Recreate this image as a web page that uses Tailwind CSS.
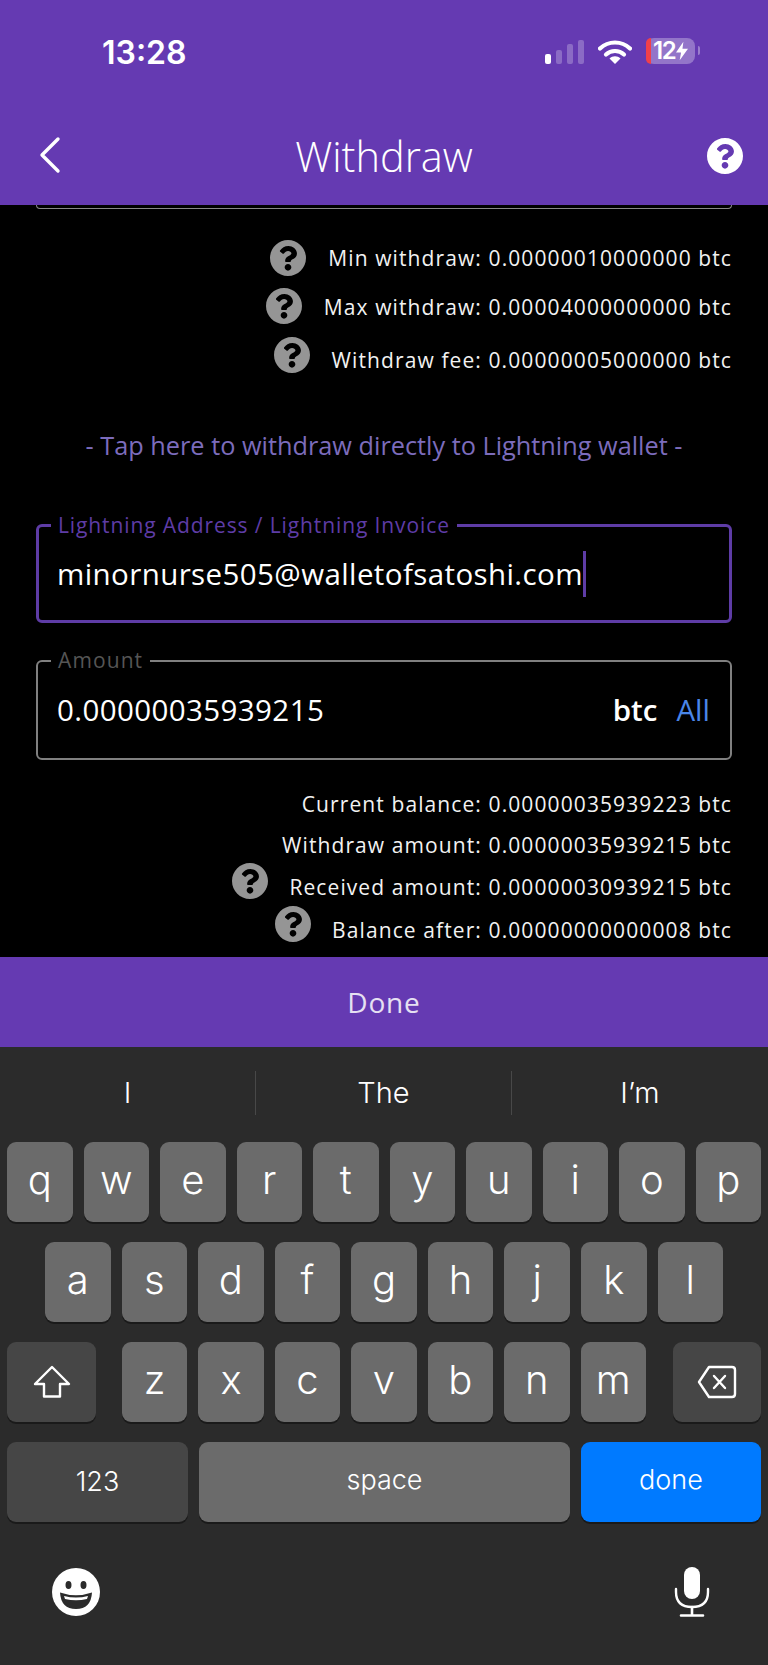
<!DOCTYPE html>
<html lang="en">
<head>
    <meta charset="UTF-8">
    <meta name="viewport" content="width=device-width, initial-scale=1.0">
    <title>Withdraw</title>
    <script src="https://cdn.jsdelivr.net/npm/@tailwindcss/browser@4"></script>
</head>
<body class="bg-black">
    <!-- shared question mark icon -->
    <svg class="hidden">
        <symbol id="help" viewBox="8 8 496 496">
            <path d="M504 256c0 136.997-111.043 248-248 248S8 392.997 8 256C8 119.083 119.043 8 256 8s248 111.083 248 248zM262.655 90c-54.497 0-89.255 22.957-116.549 63.758-3.536 5.286-2.353 12.415 2.715 16.258l34.699 26.31c5.205 3.947 12.621 3.008 16.665-2.122 17.864-22.658 30.113-35.797 57.303-35.797 20.429 0 45.698 13.148 45.698 32.958 0 14.976-12.363 22.667-32.534 33.976C247.128 238.528 216 254.941 216 296v4c0 6.627 5.373 12 12 12h56c6.627 0 12-5.373 12-12v-1.333c0-28.462 83.186-29.647 83.186-106.667 0-58.002-60.165-102-116.531-102zM256 338c-25.365 0-46 20.635-46 46 0 25.364 20.635 46 46 46s46-20.636 46-46c0-25.365-20.635-46-46-46z" fill="currentColor"/>
        </symbol>
    </svg>

    <div class="w-[768px] h-[1665px] flex flex-col overflow-hidden font-['Open_Sans',sans-serif]">
        <!-- header -->
        <header class="h-[205px] shrink-0 bg-[#653ab2] text-white flex flex-col">
            <div class="h-[122px] flex items-start justify-between">
                <span class="ml-[102px] mt-[33px] font-['Inter',sans-serif] font-semibold text-[32px] leading-[40px]">13:28</span>
                <div class="flex items-start mr-[68px] mt-[38px]">
                    <div class="flex items-end gap-[5px] h-[26px]">
                        <div class="w-[6px] h-[10px] rounded-[2px] bg-white"></div>
                        <div class="w-[6px] h-[14px] rounded-[2px] bg-white/25"></div>
                        <div class="w-[6px] h-[20px] rounded-[2px] bg-white/25"></div>
                        <div class="w-[6px] h-[24px] rounded-[2px] bg-white/25"></div>
                    </div>
                    <svg class="ml-[14px] mt-[1px]" width="34" height="25" viewBox="0 0 34 25">
                        <path d="M2 9.5C10.5 1.5 23.5 1.5 32 9.5" fill="none" stroke="white" stroke-width="4.2" stroke-linecap="round"/>
                        <path d="M8 15.5C13 10.8 21 10.8 26 15.5" fill="none" stroke="white" stroke-width="4.2" stroke-linecap="round"/>
                        <path d="M11.5 19.5C14.5 16.6 19.5 16.6 22.5 19.5L17 25Z" fill="white"/>
                    </svg>
                    <div class="ml-[14px] w-[49px] h-[26px] rounded-[8px] bg-white/30 flex items-center">
                        <div class="w-[5px] h-full rounded-l-[8px] bg-[#f0404a]"></div>
                        <span class="ml-[2px] font-['Inter',sans-serif] font-semibold text-[24px] leading-[26px] tracking-[-1.5px]">12</span>
                        <svg class="ml-[1px]" width="12" height="20" viewBox="0 0 13 20"><path d="M8 0L0 11.5H5.5L4 20L13 7.5H7Z" fill="white"/></svg>
                    </div>
                    <div class="ml-[3px] mt-[8px] w-[2px] h-[9px] rounded-r-[2px] bg-white/35"></div>
                </div>
            </div>
            <div class="relative flex items-center justify-center h-[50px]">
                <svg class="absolute left-[38px] top-[14px]" width="24" height="38" viewBox="0 0 24 38"><path d="M20 3L4 19L20 35" fill="none" stroke="white" stroke-width="3.4" stroke-linecap="round" stroke-linejoin="round"/></svg>
                <h1 class="font-light text-[41.5px] leading-[50px] mt-[18px]">Withdraw</h1>
                <svg class="absolute left-[707px] top-[16px] text-white" width="36" height="36"><use href="#help"/></svg>
            </div>
        </header>

        <!-- form -->
        <main class="h-[752px] shrink-0 bg-black text-[#f2f2f2] text-[21px] tracking-[1.1px]">
            <div class="mx-[36px] h-[4px] border-x border-b border-[#888] rounded-b-[5px]"></div>

            <div class="mt-[31px] mr-[36px] flex justify-end items-center gap-[22px] h-[36px]">
                <svg class="text-[#959595]" width="36" height="36"><use href="#help"/></svg>
                <span class="mt-[2px]">Min withdraw: 0.00000010000000 btc</span>
            </div>
            <div class="mt-[12px] mr-[36px] flex justify-end items-center gap-[22px] h-[36px]">
                <svg class="text-[#959595]" width="36" height="36"><use href="#help"/></svg>
                <span class="mt-[3px]">Max withdraw: 0.00004000000000 btc</span>
            </div>
            <div class="mt-[13px] mr-[36px] flex justify-end items-center gap-[22px] h-[36px]">
                <svg class="text-[#959595]" width="36" height="36"><use href="#help"/></svg>
                <span class="mt-[12px]">Withdraw fee: 0.00000005000000 btc</span>
            </div>

            <p class="mt-[52px] h-[40px] text-center text-[25.3px] leading-[40px] tracking-[0px] text-[#7c6cbc]">- Tap here to withdraw directly to Lightning wallet -</p>

            <div class="relative mt-[59px] mx-[36px] h-[99px] border-[3px] border-[#5e3ca6] rounded-[6px] pl-[18px] flex items-center">
                <label class="absolute left-[12px] top-[-15px] bg-black px-[7px] text-[21px] leading-[27px] tracking-[0.89px] text-[#5e3ca6]">Lightning Address / Lightning Invoice</label>
                <span class="text-white text-[29.5px] leading-[46px] tracking-[0.4px]">minornurse505@walletofsatoshi.com</span>
                <div class="w-[3px] h-[46px] bg-[#5e3ca6]"></div>
            </div>

            <div class="relative mt-[37px] mx-[36px] h-[100px] border-2 border-[#808080] rounded-[6px] pl-[19px] pr-[20px] flex items-center justify-between">
                <label class="absolute left-[13px] top-[-15px] bg-black px-[7px] text-[21px] leading-[27px] text-[#555]">Amount</label>
                <span class="text-white text-[29.5px] leading-[40px] tracking-[0.4px]">0.00000035939215</span>
                <div class="flex items-center gap-[19px] text-[29.5px] leading-[40px] tracking-[0px]">
                    <span class="text-white font-semibold">btc</span>
                    <span class="text-[#4a86e8]">All</span>
                </div>
            </div>

            <div class="mt-[30px] mr-[36px] h-[28px] leading-[28px] text-right">Current balance: 0.00000035939223 btc</div>
            <div class="mt-[13px] mr-[36px] h-[28px] leading-[28px] text-right">Withdraw amount: 0.00000035939215 btc</div>
            <div class="mt-[4px] mr-[36px] flex justify-end items-center gap-[21px] h-[36px]">
                <svg class="text-[#959595]" width="36" height="36"><use href="#help"/></svg>
                <span class="mt-[13px]">Received amount: 0.00000030939215 btc</span>
            </div>
            <div class="mt-[7px] mr-[36px] flex justify-end items-center gap-[21px] h-[36px]">
                <svg class="text-[#959595]" width="36" height="36"><use href="#help"/></svg>
                <span class="mt-[13px]">Balance after: 0.00000000000008 btc</span>
            </div>
        </main>

        <!-- done bar -->
        <button class="h-[90px] shrink-0 bg-[#653ab2] text-[#e6e0f2] text-[28px] tracking-[0.8px]">Done</button>

        <!-- keyboard -->
        <section class="h-[618px] shrink-0 bg-[#2b2b2b] text-white font-['Inter',sans-serif] font-light">
            <div class="h-[95px] pb-[4px] grid grid-cols-3 items-center text-[29px]">
                <div class="h-[44px] leading-[44px] text-center border-r border-[#484848]">I</div>
                <div class="h-[44px] leading-[44px] text-center border-r border-[#484848]">The</div>
                <div class="h-[44px] leading-[44px] text-center">I’m</div>
            </div>

            <div class="flex gap-[11px] px-[7px] h-[80px] text-[40px]">
                <div class="flex-1 rounded-[9px] bg-[#6b6b6b] shadow-[0_2px_0_#1a1a1a] flex items-center justify-center pb-[5px]">q</div>
                <div class="flex-1 rounded-[9px] bg-[#6b6b6b] shadow-[0_2px_0_#1a1a1a] flex items-center justify-center pb-[5px]">w</div>
                <div class="flex-1 rounded-[9px] bg-[#6b6b6b] shadow-[0_2px_0_#1a1a1a] flex items-center justify-center pb-[5px]">e</div>
                <div class="flex-1 rounded-[9px] bg-[#6b6b6b] shadow-[0_2px_0_#1a1a1a] flex items-center justify-center pb-[5px]">r</div>
                <div class="flex-1 rounded-[9px] bg-[#6b6b6b] shadow-[0_2px_0_#1a1a1a] flex items-center justify-center pb-[5px]">t</div>
                <div class="flex-1 rounded-[9px] bg-[#6b6b6b] shadow-[0_2px_0_#1a1a1a] flex items-center justify-center pb-[5px]">y</div>
                <div class="flex-1 rounded-[9px] bg-[#6b6b6b] shadow-[0_2px_0_#1a1a1a] flex items-center justify-center pb-[5px]">u</div>
                <div class="flex-1 rounded-[9px] bg-[#6b6b6b] shadow-[0_2px_0_#1a1a1a] flex items-center justify-center pb-[5px]">i</div>
                <div class="flex-1 rounded-[9px] bg-[#6b6b6b] shadow-[0_2px_0_#1a1a1a] flex items-center justify-center pb-[5px]">o</div>
                <div class="flex-1 rounded-[9px] bg-[#6b6b6b] shadow-[0_2px_0_#1a1a1a] flex items-center justify-center pb-[5px]">p</div>
            </div>

            <div class="flex gap-[11px] px-[45px] mt-[20px] h-[80px] text-[40px]">
                <div class="flex-1 rounded-[9px] bg-[#6b6b6b] shadow-[0_2px_0_#1a1a1a] flex items-center justify-center pb-[5px]">a</div>
                <div class="flex-1 rounded-[9px] bg-[#6b6b6b] shadow-[0_2px_0_#1a1a1a] flex items-center justify-center pb-[5px]">s</div>
                <div class="flex-1 rounded-[9px] bg-[#6b6b6b] shadow-[0_2px_0_#1a1a1a] flex items-center justify-center pb-[5px]">d</div>
                <div class="flex-1 rounded-[9px] bg-[#6b6b6b] shadow-[0_2px_0_#1a1a1a] flex items-center justify-center pb-[5px]">f</div>
                <div class="flex-1 rounded-[9px] bg-[#6b6b6b] shadow-[0_2px_0_#1a1a1a] flex items-center justify-center pb-[5px]">g</div>
                <div class="flex-1 rounded-[9px] bg-[#6b6b6b] shadow-[0_2px_0_#1a1a1a] flex items-center justify-center pb-[5px]">h</div>
                <div class="flex-1 rounded-[9px] bg-[#6b6b6b] shadow-[0_2px_0_#1a1a1a] flex items-center justify-center pb-[5px]">j</div>
                <div class="flex-1 rounded-[9px] bg-[#6b6b6b] shadow-[0_2px_0_#1a1a1a] flex items-center justify-center pb-[5px]">k</div>
                <div class="flex-1 rounded-[9px] bg-[#6b6b6b] shadow-[0_2px_0_#1a1a1a] flex items-center justify-center pb-[5px]">l</div>
            </div>

            <div class="flex px-[7px] mt-[20px] h-[80px] text-[40px]">
                <div class="w-[89px] mr-[26px] rounded-[9px] bg-[#464646] shadow-[0_2px_0_#1a1a1a] flex items-center justify-center">
                    <svg width="38" height="34" viewBox="0 0 38 34"><path d="M19 2L36 19H27V31.5H11V19H2Z" fill="none" stroke="white" stroke-width="2.4" stroke-linejoin="round"/></svg>
                </div>
                <div class="flex flex-1 gap-[11px]">
                    <div class="flex-1 rounded-[9px] bg-[#6b6b6b] shadow-[0_2px_0_#1a1a1a] flex items-center justify-center pb-[5px]">z</div>
                    <div class="flex-1 rounded-[9px] bg-[#6b6b6b] shadow-[0_2px_0_#1a1a1a] flex items-center justify-center pb-[5px]">x</div>
                    <div class="flex-1 rounded-[9px] bg-[#6b6b6b] shadow-[0_2px_0_#1a1a1a] flex items-center justify-center pb-[5px]">c</div>
                    <div class="flex-1 rounded-[9px] bg-[#6b6b6b] shadow-[0_2px_0_#1a1a1a] flex items-center justify-center pb-[5px]">v</div>
                    <div class="flex-1 rounded-[9px] bg-[#6b6b6b] shadow-[0_2px_0_#1a1a1a] flex items-center justify-center pb-[5px]">b</div>
                    <div class="flex-1 rounded-[9px] bg-[#6b6b6b] shadow-[0_2px_0_#1a1a1a] flex items-center justify-center pb-[5px]">n</div>
                    <div class="flex-1 rounded-[9px] bg-[#6b6b6b] shadow-[0_2px_0_#1a1a1a] flex items-center justify-center pb-[5px]">m</div>
                </div>
                <div class="w-[88px] ml-[27px] rounded-[9px] bg-[#464646] shadow-[0_2px_0_#1a1a1a] flex items-center justify-center">
                    <svg width="40" height="34" viewBox="0 0 40 34"><path d="M12 2H35Q38 2 38 5V29Q38 32 35 32H12L2 17Z" fill="none" stroke="white" stroke-width="2.4" stroke-linejoin="round"/><path d="M17 11L28 23M28 11L17 23" stroke="white" stroke-width="2.4" stroke-linecap="round"/></svg>
                </div>
            </div>

            <div class="flex gap-[11px] px-[7px] mt-[20px] h-[80px] text-[27px]">
                <div class="w-[181px] rounded-[9px] bg-[#464646] shadow-[0_2px_0_#1a1a1a] flex items-center justify-center">123</div>
                <div class="flex-1 rounded-[9px] bg-[#6b6b6b] shadow-[0_2px_0_#1a1a1a] flex items-center justify-center pb-[3px]">space</div>
                <div class="w-[180px] rounded-[9px] bg-[#007aff] shadow-[0_2px_0_#1a1a1a] flex items-center justify-center pb-[3px]">done</div>
            </div>

            <div class="flex justify-between items-center mt-[45px] pl-[52px] pr-[58px] h-[50px]">
                <svg width="48" height="48" viewBox="0 0 48 48">
                    <circle cx="24" cy="24" r="24" fill="white"/>
                    <ellipse cx="16.5" cy="17" rx="3" ry="4" fill="#2b2b2b"/>
                    <ellipse cx="31.5" cy="17" rx="3" ry="4" fill="#2b2b2b"/>
                    <path d="M8 24.5Q24 30 40 24.5Q39 41 24 41Q9 41 8 24.5Z" fill="#2b2b2b"/>
                    <path d="M12 28Q24 31 36 28L35 31Q24 33.5 13 31Z" fill="white"/>
                </svg>
                <svg width="36" height="50" viewBox="0 0 36 50">
                    <rect x="10" y="0" width="16" height="32" rx="8" fill="white"/>
                    <path d="M2 22V25Q2 40 18 40Q34 40 34 25V22" fill="none" stroke="white" stroke-width="2.4" stroke-linecap="round"/>
                    <path d="M18 40V48M7 48.5H29" stroke="white" stroke-width="2.6" stroke-linecap="round"/>
                </svg>
            </div>
        </section>
    </div>
</body>
</html>
